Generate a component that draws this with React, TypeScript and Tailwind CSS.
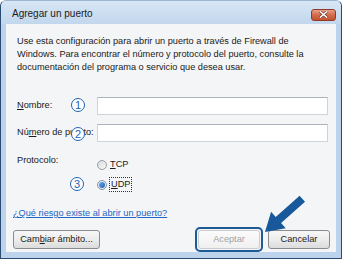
import React from 'react';

const font = "font-['Liberation_Sans',Arial,sans-serif]";

const Badge = ({ n, className }: { n: string; className: string }) => (
  <div
    className={`absolute w-[14px] h-[14px] rounded-full border-[1.5px] border-[#1c63b4] bg-white flex items-center justify-center text-[11px] leading-none text-[#1c63b4] ${className}`}
  >
    {n}
  </div>
);

const Btn = ({ children, disabled }: { children: React.ReactNode; disabled?: boolean }) => (
  <div
    className={`h-[19px] w-[62px] rounded-[3px] border flex items-center justify-center text-[9.2px] ${
      disabled
        ? 'border-[#c9cdd2] bg-gradient-to-b from-[#fbfbfb] to-[#f0f0f0] text-[#a2a2a2]'
        : 'border-[#8c8c8c] bg-gradient-to-b from-[#f7f7f7] via-[#ececec] to-[#dcdcdc] text-[#1a1a1a]'
    }`}
  >
    {children}
  </div>
);

export default function App() {
  return (
    <div className={`w-[343px] h-[260px] bg-white ${font}`}>
      <div className="relative w-[342px] h-[259px] rounded-t-[6px] border border-[#2a4c72] border-t-[#9fb6cf] bg-[#bcd3eb] flex flex-col">
        {/* title bar */}
        <div className="h-[23px] flex items-center justify-between pl-[11px] pr-[5px] rounded-t-[5px] bg-gradient-to-b from-[#d7e6f6] to-[#c2d7ed]">
          <span className="text-[10px] text-[#1b1b1b] mt-[1px]">Agregar un puerto</span>
          <div className="w-[25px] h-[12px] mt-[4px] rounded-[3px] border border-[#8d3b27] bg-gradient-to-b from-[#e7a08a] via-[#d26a4c] to-[#c4532f] flex items-center justify-center">
            <svg width="9" height="7" viewBox="0 0 9 7">
              <path d="M1 0.5 L8 6.5 M8 0.5 L1 6.5" stroke="#5a2a20" strokeWidth="2.6" />
              <path d="M1 0.5 L8 6.5 M8 0.5 L1 6.5" stroke="#ffffff" strokeWidth="1.6" />
            </svg>
          </div>
        </div>

        {/* client area */}
        <div className="mx-[5px] h-[228px] bg-[#f4f5f6] flex flex-col text-[9.2px] text-[#1a1a1a]">
          <p className="mt-[11px] ml-[11px] leading-[13px] whitespace-nowrap">
            Use esta configuración para abrir un puerto a través de Firewall de
            <br />
            Windows. Para encontrar el número y protocolo del puerto, consulte la
            <br />
            documentación del programa o servicio que desea usar.
          </p>

          <div className="mt-[23px] ml-[11px] grid grid-cols-[80px_231px] gap-y-[9px]">
            <div className="relative h-[18px] flex items-center">
              <span>
                <span className="underline">N</span>ombre:
              </span>
              <Badge n="1" className="left-[54px] top-[1px]" />
            </div>
            <div className="h-[18px] bg-white border border-[#cdd3da] border-t-[#abb2ba]" />

            <div className="relative h-[18px] flex items-center">
              <span className="whitespace-nowrap">
                Nú<span className="underline">m</span>ero de puerto:
              </span>
              <Badge n="2" className="left-[54px] top-[3px]" />
            </div>
            <div className="h-[18px] bg-white border border-[#cdd3da] border-t-[#abb2ba]" />
          </div>

          <div className="mt-[12px] ml-[11px] grid grid-cols-[80px_1fr]">
            <div className="relative leading-[13px]">
              Protocolo:
              <Badge n="3" className="left-[53px] top-[23px]" />
            </div>
            <div className="pt-[4px] flex flex-col gap-[7px]">
              <div className="h-[13px] flex items-center gap-[3px]">
                <div className="w-[10px] h-[10px] rounded-full border border-[#9a9ea3] bg-gradient-to-br from-[#d9dbde] to-[#f8f8f8]" />
                <span>
                  <span className="underline">T</span>CP
                </span>
              </div>
              <div className="h-[13px] flex items-center gap-[2px]">
                <div className="w-[10px] h-[10px] rounded-full border border-[#8a97a6] bg-[#e6ebf1] flex items-center justify-center">
                  <div className="w-[6px] h-[6px] rounded-full bg-gradient-to-br from-[#6fb0ee] to-[#1b5fb0]" />
                </div>
                <span className="px-[1px] border border-dotted border-[#333]">
                  <span className="underline">U</span>DP
                </span>
              </div>
            </div>
          </div>

          <div className="mt-[16px] ml-[7px] leading-[13px]">
            <span className="text-[#1f66c4] underline">¿Qué riesgo existe al abrir un puerto?</span>
          </div>

          <div className="mt-[7px] ml-[7px] mr-[6px] flex items-center">
            <div className="h-[19px] w-[87px] rounded-[3px] border border-[#8c8c8c] bg-gradient-to-b from-[#f7f7f7] via-[#ececec] to-[#dcdcdc] flex items-center justify-center">
              Cam<span className="underline">b</span>iar ámbito...
            </div>
            <div className="ml-auto p-[1px] rounded-[5px] border-2 border-[#1d5a96]">
              <Btn disabled>Aceptar</Btn>
            </div>
            <div className="ml-[5px]">
              <Btn>Cancelar</Btn>
            </div>
          </div>
        </div>

        {/* annotation arrow */}
        <svg className="absolute left-[-1px] top-[-1px] pointer-events-none" width="343" height="260">
          <polygon
            points="265,232 285.7,228.2 281.1,223 305,201.7 299.6,195.8 275.7,217 271.1,211.8"
            fill="#17599a"
          />
        </svg>
      </div>
    </div>
  );
}
